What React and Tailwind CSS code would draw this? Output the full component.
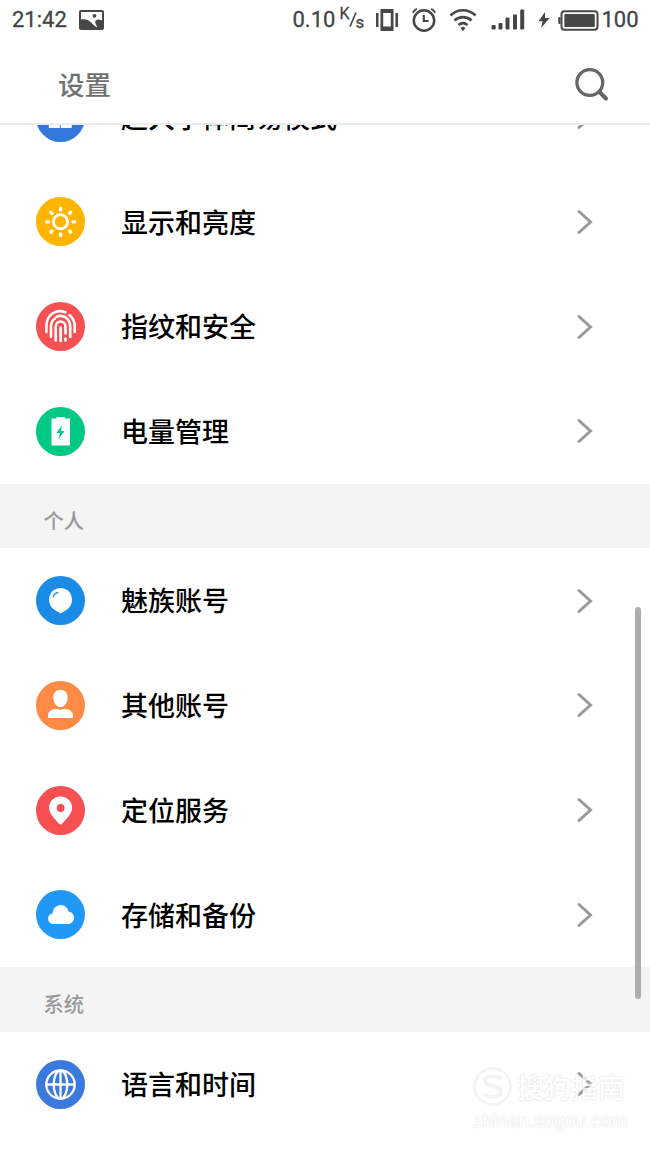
import React from 'react';

const EasyModeIcon = () => (
  <g fill="#fff">
    <rect x="12.800" y="13" width="10.500" height="10" />
    <rect x="25.200" y="13" width="10.500" height="10" />
    <rect x="12.800" y="24.700" width="11" height="10.300" />
    <rect x="24.700" y="24.700" width="11" height="10.300" />
  </g>
);

const BrightnessIcon = () => (
  <g stroke="#fff" fill="none">
    <circle cx="24.5" cy="24.7" r="7.1" strokeWidth="2.8" />
    <path
      d="M24.500 11.300v1.600M24.500 37v1.600M10.700 24.900h1.600M36.900 24.900h1.600M14.900 15.300l1 1M33.600 34l1 1M14.900 35l1-1M33.600 16.300l1-1"
      strokeWidth="3.4"
      strokeLinecap="round"
    />
  </g>
);

const FingerprintIcon = () => (
  <g stroke="#fff" fill="none" strokeWidth="2.6" strokeLinecap="round">
    <path d="M10.400 30v-5.500C10.400 12.500 20 6.700 29.500 10.300" />
    <path d="M33.500 13.200C37 16 38.700 20 38.700 24v6" />
    <path d="M15 35v-10.500C15 20.500 16.800 18 19 16.500" />
    <path d="M20.500 14.700C28 12 34.200 17 34.200 25v10" />
    <path d="M19.700 38.500v-13.500C19.700 17.700 29.500 17.700 29.500 25v6.500" />
    <path d="M24.600 25.500v13.500M29.500 36.500v2" />
  </g>
);

const BatteryIcon = () => (
  <>
    <path d="M20.500 9.900h8.200v1.700h5.300v27h-18.500v-27h5z" fill="#fff" />
    <path d="M26 18.200l-5.700 7.800h3.700l-1.700 6.200 6.300-8.200h-3.800z" fill="#00c983" />
  </>
);

const MeizuIcon = () => (
  <>
    <path
      d="M24.600 12.100c6.600 0 11.400 5 11.400 11.500 0 6-3.400 9.600-7.200 11.300L24.600 37.400l-4.200-2.500c-3.800-1.700-7.300-5.300-7.300-11.300 0-6.500 4.900-11.500 11.500-11.500z"
      fill="#fff"
    />
    <path d="M17 21c.7-2.300 2.500-4 5-4.700" stroke="#1a8ce8" strokeWidth="1.200" fill="none" strokeLinecap="round" />
  </>
);

const PersonIcon = () => (
  <g fill="#fff">
    <path d="M24.500 8.800c4.400 0 7.200 3.200 7.200 7.500 0 5.600-3.300 9.900-7.200 9.900s-7.200-4.300-7.200-9.900c0-4.300 2.800-7.500 7.200-7.500z" />
    <path d="M12 37v-2.700c0-3.500 3.500-6.400 8-6.400h1c2.300 1 4.800 1 7 0h1c4.700 0 8 2.900 8 6.400V37z" />
  </g>
);

const PinIcon = () => (
  <path
    fillRule="evenodd"
    d="M24.600 10.600c6.400 0 11.500 4.900 11.500 11.100 0 6.800-6.500 11.500-9.700 15.900-1.100 1.300-2.500 1.300-3.600 0-3.200-4.400-9.700-9.100-9.700-15.900 0-6.200 5.100-11.100 11.500-11.100zm0 7.500a3.900 3.900 0 100 7.800 3.900 3.900 0 000-7.800z"
    fill="#fff"
  />
);

const CloudIcon = () => (
  <path
    d="M16.800 33.900a5.300 5.300 0 01-.2-10.500c.3-4.700 3.600-8.500 8.100-8.500 4 0 7 2.800 7.800 6.700 3.400.3 5.500 3 5.500 6.200 0 3.600-2.600 6.100-6 6.100z"
    fill="#fff"
  />
);

const GlobeIcon = () => (
  <g stroke="#fff" fill="none" strokeWidth="2.300">
    <circle cx="24.500" cy="24.500" r="14.200" />
    <ellipse cx="24.500" cy="24.500" rx="6.800" ry="14.200" />
    <path d="M10.500 24.500h28M24.500 10.500v28" />
  </g>
);

const sections = [
  {
    title: null,
    items: [
      { label: '超大字体简易模式', color: 'bg-[#3379dc]', icon: EasyModeIcon },
      { label: '显示和亮度', color: 'bg-[#ffb400]', icon: BrightnessIcon },
      { label: '指纹和安全', color: 'bg-[#f65053]', icon: FingerprintIcon },
      { label: '电量管理', color: 'bg-[#00c983]', icon: BatteryIcon },
    ],
  },
  {
    title: '个人',
    items: [
      { label: '魅族账号', color: 'bg-[#1a8ce8]', icon: MeizuIcon },
      { label: '其他账号', color: 'bg-[#ff8a46]', icon: PersonIcon },
      { label: '定位服务', color: 'bg-[#f65053]', icon: PinIcon },
      { label: '存储和备份', color: 'bg-[#2198f5]', icon: CloudIcon },
    ],
  },
  {
    title: '系统',
    items: [{ label: '语言和时间', color: 'bg-[#3c79dc]', icon: GlobeIcon }],
  },
];

const StatusBar = () => (
  <div className="flex h-10 items-center pl-3 text-[22px] leading-none text-[#444] [-webkit-text-stroke:0.3px_#444] font-['Roboto',sans-serif]">
    <span className="w-[67px]">21:42</span>
    <svg width="25" height="20" viewBox="0 0 25 20">
      <rect width="25" height="20" rx="2" fill="#474747" />
      <path d="M2 2h21v8.500C20 9 17.500 9.500 16.500 11c-.8 1.200.2 2.500 1.800 6.500C15 16 13.500 13.500 11 11.500 8.500 9.500 5.500 8.800 2 9.500z" fill="#fff" />
      <circle cx="15.500" cy="5.800" r="1.900" fill="#474747" />
    </svg>

    <span className="ml-[188.500px] w-[47px]">0.10</span>
    {/* Network speed unit */}
    <span className="flex w-[35.500px] text-[16px]">
      <span className="-mt-1">K</span>
      <svg width="8" height="18" viewBox="0 0 8 18" className="-mx-px">
        <path d="M1 16.500L7 2.500" stroke="#4a4a4a" strokeWidth="1.700" />
      </svg>
      <span className="mt-[4px] text-[17px]">s</span>
    </span>

    {/* Vibrate */}
    <svg width="24" height="24" viewBox="0 0 24 24" fill="#474747">
      <path d="M1 5h2.500v14H1zM20.500 5h2.500v14h-2.500z" />
      <path fillRule="evenodd" d="M5.500 1h13v22h-13zM8.200 5v13.500h7.600V5z" />
    </svg>

    {/* Alarm */}
    <svg width="26" height="26" viewBox="0 0 26 26" fill="none" stroke="#474747" className="ml-3">
      <circle cx="13" cy="13.500" r="10.200" strokeWidth="2.500" />
      <path d="M12.800 8v6h4.800" strokeWidth="2.200" />
      <path d="M1.800 5.700c1-1.700 2.500-3 4-3.800M24.200 5.700c-1-1.700-2.500-3-4-3.800" strokeWidth="1.800" />
    </svg>

    {/* Wifi */}
    <svg width="28" height="24" viewBox="0 0 28 24" fill="none" stroke="#474747" strokeWidth="2.700" className="ml-3">
      <path d="M1.500 7.500c7-7 18-7 25 0M5.500 12.500c5-4.500 12-4.500 17 0M9.500 17c3-2.500 6-2.500 9 0" />
      <path d="M11.500 20l2.500-1.500 2.500 1.500-2.500 3.300z" fill="#474747" stroke="none" />
    </svg>

    {/* Signal */}
    <svg width="34" height="22" viewBox="0 0 34 22" fill="#474747" className="ml-[13.500px]">
      <rect x="0.500" y="16" width="4.200" height="4.500" rx="1" />
      <rect x="7.500" y="14" width="4" height="6.500" rx="1" />
      <rect x="14.500" y="8.500" width="4" height="12" rx="1" />
      <rect x="22" y="5.500" width="4" height="15" rx="1" />
      <rect x="29.200" y="0.500" width="4" height="20" rx="1" />
    </svg>

    {/* Charging battery */}
    <svg width="12" height="18" viewBox="0 0 12 18" fill="#474747" className="ml-[13.500px]">
      <path d="M7 1L.5 10.200h4L3.200 17 11.500 7H7z" />
    </svg>
    <svg width="41" height="21" viewBox="0 0 41 21" className="ml-[8px]">
      <path d="M2.500 7H1.500Q.3 7 .3 8.200v4.600Q.3 14 1.500 14h1z" fill="#474747" />
      <rect x="3.500" y="1.200" width="36" height="18.600" rx="3" fill="none" stroke="#474747" strokeWidth="2" />
      <rect x="6.300" y="4" width="30.500" height="13" rx="1" fill="#474747" />
    </svg>
    <span className="ml-[2.500px]">100</span>
  </div>
);

const Header = () => (
  <header className="flex h-[85px] items-center justify-between border-b-2 border-[#ececec] pl-[58px] pr-10">
    <h1 className="mt-[6px] text-[26.5px] font-medium leading-none text-[#707070]">设置</h1>
    <svg width="36" height="36" viewBox="0 0 36 36" fill="none" stroke="#666" className="mt-[6px]">
      <circle cx="15.800" cy="15.500" r="12.900" strokeWidth="3.300" />
      <path d="M25.500 25l6.500 6.500" strokeWidth="4" strokeLinecap="round" />
    </svg>
  </header>
);

const SettingRow = ({ label, color, icon: Icon }) => (
  <li className="flex h-[104.7px] items-center pl-9 pr-[57px]">
    <span className={`h-[49px] w-[49px] shrink-0 rounded-full ${color}`}>
      <svg width="49" height="49" viewBox="0 0 49 49">
        <Icon />
      </svg>
    </span>
    <span className="-mt-[1.500px] ml-9 flex-1 text-[27px] font-medium leading-none text-black">{label}</span>
    <svg width="17" height="26" viewBox="0 0 17 26" fill="none" stroke="#999" strokeWidth="3" strokeLinecap="round">
      <path d="M3 2.500L14.500 13 3 23.500" />
    </svg>
  </li>
);

const Watermark = () => (
  <div className="absolute left-[473px] top-[1066px] text-white opacity-80 [text-shadow:0_0_2px_#ccc]">
    <div className="flex items-center gap-[5px]">
      <svg width="39" height="41" viewBox="0 0 39 41" fill="none">
        <circle cx="19.500" cy="20.500" r="18" stroke="#f1f1f1" strokeWidth="2.500" />
        <path d="M28 13c-4-4-16-4-16 2 0 6 16 4 16 11 0 6-12 6-17 2" stroke="#f1f1f1" strokeWidth="4" />
      </svg>
      <span className="text-[27px] font-medium leading-none">搜狗指南</span>
    </div>
    <p className="text-[19px] leading-[27px] font-['Liberation_Sans',sans-serif]">zhinan.sogou.com</p>
  </div>
);

const App = () => {
  return (
    <div className="relative flex h-[1155px] w-[650px] flex-col overflow-hidden bg-white font-['Noto_Sans_CJK_SC',sans-serif]">
      <StatusBar />
      <Header />

      {/* Scrolled list, the first row is partly under the header */}
      <main className="min-h-0 flex-1 overflow-hidden">
        <div className="-mt-[60.200px]">
          {sections.map((section, index) => (
            <section key={index}>
              {section.title && (
                <h2 className="flex h-[64.8px] items-center bg-[#f4f4f4] pl-[43.5px] pt-[8px] text-[20.300px] font-medium leading-none text-[#999]">
                  {section.title}
                </h2>
              )}
              <ul>
                {section.items.map((item) => (
                  <SettingRow key={item.label} {...item} />
                ))}
              </ul>
            </section>
          ))}
        </div>
      </main>

      {/* Scroll thumb */}
      <div className="absolute left-[635px] top-[607px] h-[392px] w-[6px] rounded-full bg-[#adadad]" />
      <Watermark />
    </div>
  );
};

export default App;
